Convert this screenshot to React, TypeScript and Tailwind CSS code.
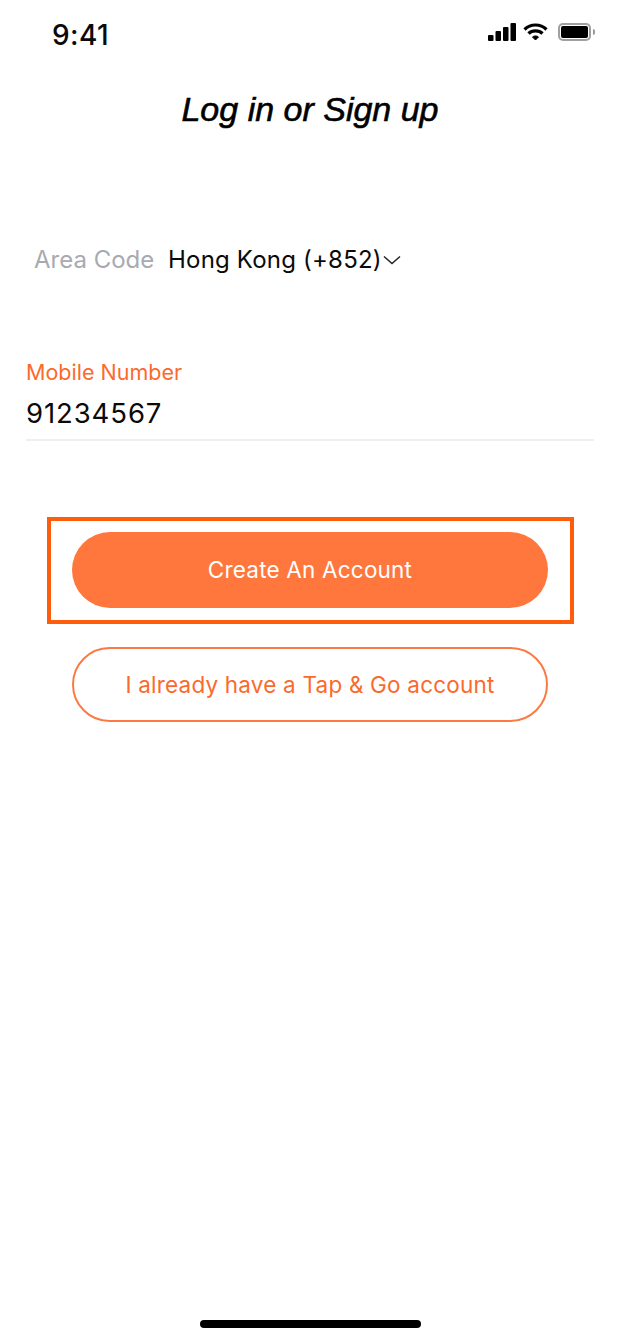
const App = () => {
  return (
    <div className="w-[620px] h-[1340px] bg-white flex flex-col font-['Inter',sans-serif] overflow-hidden">
      {/* status bar */}
      <div className="h-[50px] pt-[20px] pl-[52px] pr-[25px] flex justify-between items-center">
        <span className="text-[28px] leading-[30px] font-medium text-[#0a0a0a] tracking-[0.4px]">9:41</span>
        <div className="flex items-center mb-[6px]">
          <svg width="28" height="18" viewBox="0 0 28 18" fill="#000">
            <rect x="0" y="12" width="5.5" height="6" rx="1" />
            <rect x="7.5" y="8" width="5.5" height="10" rx="1" />
            <rect x="15" y="4" width="5.5" height="14" rx="1" />
            <rect x="22.5" y="0" width="5.5" height="18" rx="1" />
          </svg>
          <svg width="25" height="18" viewBox="0 0 25 18" fill="none" stroke="#000" strokeWidth="3.2" className="ml-[7px]">
            <path d="M1.5 6.5 C7.5 0.5 17.5 0.5 23.5 6.5" />
            <path d="M5.5 10.5 C9 7 16 7 19.5 10.5" />
            <path d="M9.5 14 L12.5 17 L15.5 14 C14 12.6 11 12.6 9.5 14Z" fill="#000" strokeWidth="1" />
          </svg>
          <div className="ml-[10px] flex items-center gap-[2px]">
            <div className="w-[33px] h-[18px] rounded-[5px] border-2 border-[#a0a0a0] p-px">
              <div className="w-full h-full rounded-[2px] bg-black" />
            </div>
            <div className="w-[2px] h-[6px] rounded-r-[2px] bg-[#9a9a9a]" />
          </div>
        </div>
      </div>

      {/* title */}
      <h1 className="mt-[41px] text-center font-['Liberation_Sans',sans-serif] italic font-normal text-[34px] leading-[36px] text-black [-webkit-text-stroke:0.6px_#000]">
        Log in or Sign up
      </h1>

      {/* area code */}
      <div className="mt-[118px] pl-[34px] flex items-center text-[24px] leading-[30px]">
        <span className="text-[#a8aab2] w-[134px]">Area Code</span>
        <span className="text-[#0a0a0a] tracking-[0.2px]">Hong Kong (+852)</span>
        <svg width="20" height="10" viewBox="0 0 20 10" fill="none" stroke="#222" strokeWidth="1.5">
          <path d="M2 1.5 L10 8.5 L18 1.5" />
        </svg>
      </div>

      {/* mobile number */}
      <div className="mt-[84px] mx-[26px] border-b-2 border-[#eceef0] pb-[10px]">
        <div className="text-[#fb6a2c] text-[21.5px] leading-[26px]">Mobile Number</div>
        <div className="mt-[12px] text-[#0a0a0a] text-[27.5px] leading-[32px] tracking-[0.9px]">91234567</div>
      </div>

      {/* buttons */}
      <div className="mt-[76px] flex flex-col items-center">
        <div className="w-[527px] h-[107px] border-[4px] border-[#ff5d0c] flex items-center justify-center">
          <button className="w-[476px] h-[76px] mb-[2px] rounded-full bg-[#ff773c] text-white text-[22.5px] tracking-[0.2px]">
            Create An Account
          </button>
        </div>
        <button className="mt-[23px] w-[476px] h-[75px] rounded-full border-2 border-[#fb7a42] text-[#fb6a2c] text-[22.5px] tracking-[0.2px]">
          I already have a Tap &amp; Go account
        </button>
      </div>

      {/* home indicator */}
      <div className="mt-auto mb-[12px] mx-auto w-[221px] h-[8px] rounded-full bg-black" />
    </div>
  );
};

export default App;
